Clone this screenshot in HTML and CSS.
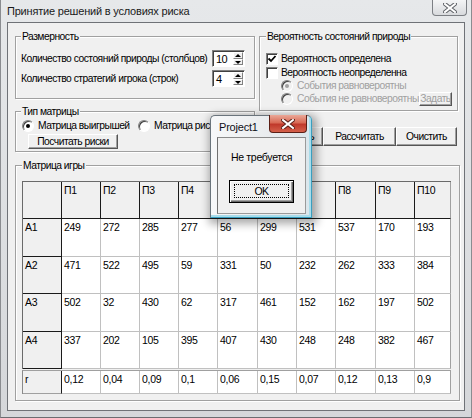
FILE: index.html
```html
<!DOCTYPE html>
<html lang="ru">
<head>
<meta charset="utf-8">
<title>Принятие решений в условиях риска</title>
<link rel="stylesheet" href="styles.css">
</head>
<body>
<div class="window">
  <div class="titlebar">
    <span class="title">Принятие решений в условиях риска</span>
    <span class="main-close">
      <svg width="14" height="10" viewBox="0 0 14 10"><path d="M2 1 L12 9 M12 1 L2 9" stroke="#5e6166" stroke-width="4" stroke-linecap="square"/><path d="M2 1 L12 9 M12 1 L2 9" stroke="#ffffff" stroke-width="2" stroke-linecap="square"/></svg>
    </span>
  </div>
  <div class="client">
    <div class="top">
      <div class="col-left">
        <fieldset class="group g-size">
          <legend>Размерность</legend>
          <div class="frow"><span>Количество состояний природы (столбцов)</span><span class="spin"><span class="spin-val">10</span><span class="spin-btns"><i class="up"></i><i class="down"></i></span></span></div>
          <div class="frow"><span>Количество стратегий игрока (строк)</span><span class="spin"><span class="spin-val">4</span><span class="spin-btns"><i class="up"></i><i class="down"></i></span></span></div>
        </fieldset>
        <fieldset class="group g-type">
          <legend>Тип матрицы</legend>
          <div class="radios">
            <span class="opt opt-win"><span class="radio checked"></span>Матрица выигрышей</span>
            <span class="opt"><span class="radio"></span>Матрица рисков</span>
          </div>
          <button class="btn btn-risk" type="button">Посчитать риски</button>
        </fieldset>
      </div>
      <div class="col-right">
        <fieldset class="group g-prob">
          <legend>Вероятность состояний природы</legend>
          <div class="prow r1"><span class="check"><svg width="10" height="10" viewBox="0 0 10 10"><path d="M1.5 4.5 L4 7 L8.5 2" fill="none" stroke="#000" stroke-width="1.8"/></svg></span>Вероятность определена</div>
          <div class="prow r2"><span class="check"></span>Вероятность неопределенна</div>
          <div class="prow sub disabled r3"><span class="radio checked"></span>События равновероятны</div>
          <div class="prow sub disabled r4"><span class="radio"></span>События не равновероятны<button class="btn btn-set" type="button" disabled>Задать</button></div>
        </fieldset>
        <div class="actions">
          <button class="btn b1" type="button">Заполнить</button>
          <button class="btn b2" type="button">Рассчитать</button>
          <button class="btn b3" type="button">Очистить</button>
        </div>
      </div>
    </div>
    <fieldset class="group g-matrix">
      <legend>Матрица игры</legend>
      <div class="sg main">
        <div class="c f"></div><div class="c f">П1</div><div class="c f">П2</div><div class="c f">П3</div><div class="c f">П4</div><div class="c f">П5</div><div class="c f">П6</div><div class="c f">П7</div><div class="c f">П8</div><div class="c f">П9</div><div class="c f last">П10</div>
        <div class="c f">A1</div><div class="c">249</div><div class="c">272</div><div class="c">285</div><div class="c">277</div><div class="c">56</div><div class="c">299</div><div class="c">531</div><div class="c">537</div><div class="c">170</div><div class="c last">193</div>
        <div class="c f">A2</div><div class="c">471</div><div class="c">522</div><div class="c">495</div><div class="c">59</div><div class="c">331</div><div class="c">50</div><div class="c">232</div><div class="c">262</div><div class="c">333</div><div class="c last">384</div>
        <div class="c f">A3</div><div class="c">502</div><div class="c">32</div><div class="c">430</div><div class="c">62</div><div class="c">317</div><div class="c">461</div><div class="c">152</div><div class="c">162</div><div class="c">197</div><div class="c last">502</div>
        <div class="c f">A4</div><div class="c">337</div><div class="c">202</div><div class="c">105</div><div class="c">395</div><div class="c">407</div><div class="c">430</div><div class="c">248</div><div class="c">248</div><div class="c">382</div><div class="c last">467</div>
      </div>
      <div class="sg prob">
        <div class="c f">r</div><div class="c">0,12</div><div class="c">0,04</div><div class="c">0,09</div><div class="c">0,1</div><div class="c">0,06</div><div class="c">0,15</div><div class="c">0,07</div><div class="c">0,12</div><div class="c">0,13</div><div class="c last">0,9</div>
      </div>
    </fieldset>
  </div>
  <div class="dialog">
    <div class="dlg-title">
      <span class="dlg-caption">Project1</span>
      <span class="dlg-close">
        <svg width="14" height="10" viewBox="0 0 14 10"><path d="M2 1 L12 9 M12 1 L2 9" stroke="#5a2018" stroke-width="4" stroke-linecap="square"/><path d="M2 1 L12 9 M12 1 L2 9" stroke="#ffffff" stroke-width="2" stroke-linecap="square"/></svg>
      </span>
    </div>
    <div class="dlg-client">
      <div class="dlg-text">Не требуется</div>
      <button class="btn ok" type="button"><span class="focus">OK</span></button>
    </div>
  </div>
</div>
</body>
</html>
```

FILE: styles.css
```css
* { box-sizing: border-box; }
html, body { margin: 0; padding: 0; }
body {
  width: 472px; height: 418px; overflow: hidden;
  background: #d9dbde;
  font-family: "Liberation Sans", Arial, sans-serif;
  font-size: 10.3px;
  letter-spacing: -0.5px;
  color: #000;
}
.window {
  position: relative;
  width: 472px; height: 418px;
  display: flex; flex-direction: column;
  background: linear-gradient(#e6e8ea, #d5d7da);
  border-left: 1px solid #8a8c90;
  border-right: 1px solid #8a8c90;
  border-bottom: 1px solid #6a6c70;
}
.titlebar { height: 22px; flex: none; display: flex; align-items: flex-start; padding-left: 6px; }
.title { margin-top: 5px; font-size: 11px; line-height: 13px; letter-spacing: -0.2px; color: #1a1a1a; }
.main-close {
  margin-left: auto; margin-right: 4px;
  width: 35px; height: 16px;
  border: 1px solid #7c7f84; border-top: none;
  border-radius: 0 0 4px 4px;
  background: linear-gradient(#f4f5f6, #d8dadd);
  display: flex; align-items: center; justify-content: center;
}
.client {
  flex: 1;
  margin: 0 6px 6px 6px;
  border: 1px solid #6f7277;
  background: #f0f0f0;
  padding: 7px 4px 0 7px;
  display: flex; flex-direction: column;
}
.top { display: flex; gap: 4px; width: 443px; }
.col-left { width: 240px; display: flex; flex-direction: column; }
.col-right { width: 199px; display: flex; flex-direction: column; }

.group {
  margin: 0; min-width: 0;
  border: 1px solid #a0a0a0;
  box-shadow: inset 1px 1px 0 #fff, 1px 1px 0 #fff;
}
.group legend { padding: 0 1px; line-height: 13px; background: #f0f0f0; }

.g-size { height: 69px; padding: 7px 5px 0 5px; }
.frow { display: flex; align-items: center; height: 17px; margin-bottom: 3px; white-space: nowrap; }
.spin {
  margin-left: auto; margin-right: 4px;
  width: 33px; height: 17px;
  background: #fff;
  border: 1px solid; border-color: #808080 #fff #fff #808080;
  box-shadow: inset 1px 1px 0 #404040;
  display: flex; align-items: stretch;
}
.spin-val { flex: 1; padding: 2px 0 0 3px; font-size: 11px; line-height: 12px; }
.spin-btns { width: 10px; display: flex; flex-direction: column; margin: 1px 1px 1px 0; }
.spin-btns i {
  flex: 1; background: #f0f0f0; position: relative;
  border: 1px solid; border-color: #fff #808080 #808080 #fff;
}
.spin-btns i::after {
  content: ""; position: absolute; left: 1px; top: 1px;
  border-left: 3px solid transparent; border-right: 3px solid transparent;
}
.spin-btns .up::after { border-bottom: 3px solid #000; }
.spin-btns .down::after { border-top: 3px solid #000; top: 1px; }

.g-type { margin-top: 6px; height: 47px; padding: 1px 5px 0 5px; }
.radios { display: flex; align-items: center; height: 13px; white-space: nowrap; }
.opt { display: flex; align-items: center; }
.opt-win { width: 117px; padding-left: 1px; }
.radio {
  width: 12px; height: 12px; border-radius: 50%;
  background: #fff;
  border: 1px solid; border-color: #808080 #fff #fff #808080;
  box-shadow: inset 1px 1px 0 #404040;
  margin-right: 4px; position: relative; flex: none;
}
.radio.checked::after {
  content: ""; position: absolute; left: 3px; top: 3px;
  width: 4px; height: 4px; border-radius: 50%; background: #000;
}
.btn {
  font: inherit; letter-spacing: inherit; color: #000;
  background: #f0f0f0;
  border: 1px solid; border-color: #fff #555 #555 #fff;
  box-shadow: inset -1px -1px 0 #a0a0a0;
  padding: 0; margin: 0;
  display: flex; align-items: center; justify-content: center;
  white-space: nowrap;
}
.btn-risk { margin: 2px 0 0 7px; width: 90px; height: 15px; }

.g-prob { height: 81px; padding: 9px 5px 0 6px; }
.prow { display: flex; align-items: center; height: 13px; white-space: nowrap; }
.r2 { margin-top: 1px; }
.check {
  width: 12px; height: 12px; background: #fff; flex: none;
  border: 1px solid; border-color: #808080 #fff #fff #808080;
  box-shadow: inset 1px 1px 0 #404040;
  margin-right: 3px;
  display: flex; align-items: center; justify-content: center;
}
.prow.sub { padding-left: 15px; }
.disabled { color: #a0a0a0; }
.disabled .radio { background: #f0f0f0; }
.disabled .radio.checked::after { background: #a0a0a0; }
.btn-set { margin-left: auto; width: 35px; height: 14px; color: #a0a0a0; }

.actions { display: flex; margin-top: 16px; height: 19px; }
.actions .btn { height: 19px; }
.b1 { width: 64px; }
.b2 { width: 73px; }
.b3 { width: 61px; }

.g-matrix { margin-top: 7px; width: 445px; height: 242px; padding: 9px 6px 0 6px; }
.sg {
  display: grid;
  grid-template-columns: 39px 39px 39px 39px 39px 40px 39px 39px 40px 39px 36px;
  width: 429px;
  border-top: 1px solid #6a6a6a;
  border-left: 1px solid #6a6a6a;
  background: #fff;
}
.sg.main { grid-template-rows: 37px 38px 37px 38px 37px; }
.sg.prob { grid-template-rows: 23px; margin-top: 1px; border-top-color: #a0a0a0; border-left-color: #8a8a8a; }
.c {
  border-right: 1px solid #c0c0c0;
  border-bottom: 1px solid #c0c0c0;
  background: #fff;
  padding: 2px 0 0 2px;
  line-height: 12px;
  font-size: 10.5px;
  letter-spacing: -0.3px;
  white-space: nowrap; overflow: hidden;
}
.c.f { background: #f0f0f0; border-color: #1a1a1a; }
.c.last { border-right-color: #a0a0a0; }
.sg.prob .c.f { border-bottom-color: #a0a0a0; }

.dialog {
  position: absolute; left: 209px; top: 115px;
  width: 102px; height: 103px;
  border: 1px solid #6a747c;
  border-right-color: #3a9fc0; border-bottom-color: #3a9fc0;
  border-radius: 5px 5px 0 0;
  background: linear-gradient(90deg, #f7f8f9, #e4e7ea 80%, #d9e6ec);
  box-shadow: inset -2px -2px 0 #a8dcea, 2px 3px 9px 3px rgba(0,0,0,0.33);
  display: flex; flex-direction: column;
  padding: 0 5px 3px 6px;
}
.dlg-title { height: 21px; flex: none; display: flex; align-items: flex-start; }
.dlg-caption { margin: 5px 0 0 2px; font-size: 11px; line-height: 13px; letter-spacing: -0.2px; color: #101018; }
.dlg-close {
  margin: -1px -1px 0 auto;
  width: 38px; height: 18px;
  border: 1px solid #5b1f16; border-top: none;
  border-radius: 0 0 4px 4px;
  background: linear-gradient(#eaa898 0%, #d86a55 45%, #c0392b 55%, #d4604a 100%);
  display: flex; align-items: center; justify-content: center;
}
.dlg-client {
  flex: 1;
  border: 1px solid #9a9a9a;
  border-left-color: #707070; border-top-color: #8a8a8a;
  background: #f0f0f0;
  display: flex; flex-direction: column; align-items: center;
}
.dlg-text { margin-top: 13px; line-height: 12px; white-space: nowrap; font-size: 10.5px; letter-spacing: -0.3px; }
.btn.ok {
  margin-top: 17px; width: 65px; height: 23px;
  border: 1px solid #000;
  box-shadow: inset 1px 1px 0 #fff, inset -1px -1px 0 #696969, inset -2px -2px 0 #a0a0a0;
  padding: 3px 4px 4px 4px; align-items: stretch;
  font-size: 10.5px;
}
.focus {
  flex: 1; border: 1px dotted #000;
  display: flex; align-items: center; justify-content: center;
}
```
